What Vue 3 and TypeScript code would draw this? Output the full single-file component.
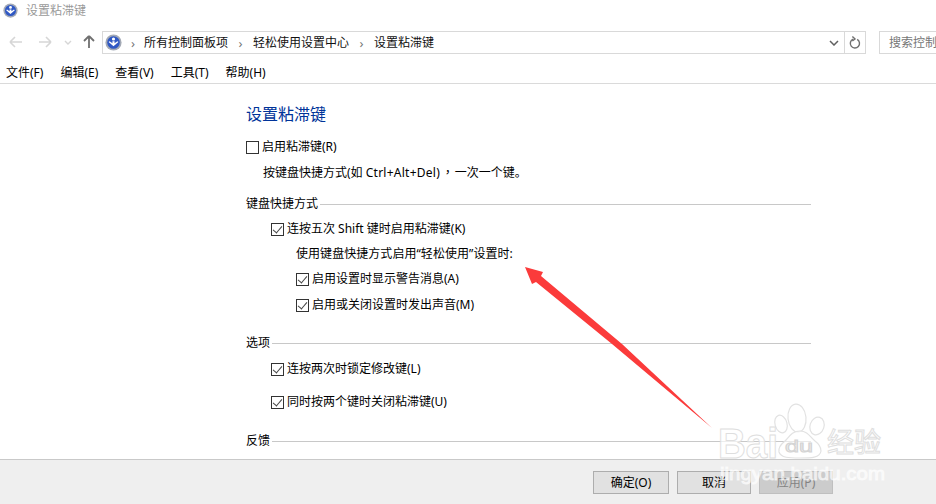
<script setup lang="ts">
const menus: string[] = ['文件(F)', '编辑(E)', '查看(V)', '工具(T)', '帮助(H)']
</script>

<template>
  <div class="window">
    <div class="titlebar">
      <svg class="logo" viewBox="0 0 16 16" width="15" height="15">
        <circle cx="8" cy="8" r="7.6" fill="#a3a9b5" />
        <circle cx="8" cy="8" r="5.9" fill="#2f58c4" />
        <circle cx="8" cy="4.7" r="1.5" fill="#fff" />
        <path d="M3.4 7.6 8 11.6l4.6-4-.9-.8L9 8.7V6.8H7v1.9L4.3 6.8z" fill="#fff" />
      </svg>
      <span>设置粘滞键</span>
    </div>

    <div class="navbar">
      <svg class="nav-icons" width="96" height="22" viewBox="0 0 96 22">
        <path d="M10 11h12M10 11l5-5M10 11l5 5" fill="none" stroke="#d6d6d6" stroke-width="1.6" />
        <path d="M39 11h12M51 11l-5-5M51 11l-5 5" fill="none" stroke="#d6d6d6" stroke-width="1.6" />
        <path d="M65 10l3 3 3-3" fill="none" stroke="#d6d6d6" stroke-width="1.4" />
        <path d="M89 17V5M89 5l-5 5M89 5l5 5" fill="none" stroke="#707070" stroke-width="1.8" />
      </svg>
      <div class="address">
        <svg class="logo" viewBox="0 0 16 16" width="17" height="17">
          <circle cx="8" cy="8" r="7.6" fill="#a3a9b5" />
          <circle cx="8" cy="8" r="5.9" fill="#2f58c4" />
          <circle cx="8" cy="4.7" r="1.5" fill="#fff" />
          <path d="M3.4 7.6 8 11.6l4.6-4-.9-.8L9 8.7V6.8H7v1.9L4.3 6.8z" fill="#fff" />
        </svg>
        <span class="crumb-sep first">›</span>
        <span>所有控制面板项</span>
        <span class="crumb-sep">›</span>
        <span>轻松使用设置中心</span>
        <span class="crumb-sep">›</span>
        <span>设置粘滞键</span>
        <span class="spacer"></span>
        <svg class="chev" width="10" height="6" viewBox="0 0 10 6"><path d="M1 1l4 4 4-4" fill="none" stroke="#606060" stroke-width="1.5" /></svg>
        <div class="refresh">
          <svg width="12" height="14" viewBox="0 0 12 14"><path d="M4 3.2A4.6 4.6 0 1 0 8.2 3.4M3.4 .6 6 3 3.4 5" fill="none" stroke="#707070" stroke-width="1.4" /></svg>
        </div>
      </div>
      <div class="search">搜索控制</div>
    </div>

    <div class="menubar">
      <span v-for="m in menus" :key="m">{{ m }}</span>
    </div>

    <div class="main">
      <h1>设置粘滞键</h1>
      <label class="row r-enable"><i class="box"></i>启用粘滞键(R)</label>
      <p class="desc">按键盘快捷方式(如 <span class="latin">Ctrl+Alt+Del</span>)<span class="comma">，</span>一次一个键。</p>

      <div class="group g1"><span>键盘快捷方式</span></div>
      <label class="row in1 r-a"><i class="box on"></i>连按五次 Shift 键时启用粘滞键(K)</label>
      <p class="sub">使用键盘快捷方式启用“轻松使用”设置时:</p>
      <label class="row in2 r-b"><i class="box on"></i>启用设置时显示警告消息(A)</label>
      <label class="row in2 r-c"><i class="box on"></i>启用或关闭设置时发出声音(M)</label>

      <div class="group g2"><span>选项</span></div>
      <label class="row in1 r-d"><i class="box on"></i>连按两次时锁定修改键(L)</label>
      <label class="row in1 r-e"><i class="box on"></i>同时按两个键时关闭粘滞键(U)</label>

      <div class="group g3"><span>反馈</span></div>
    </div>

    <div class="footer">
      <button class="ok">确定(O)</button>
      <button class="cancel">取消</button>
      <button class="apply" disabled>应用(P)</button>
    </div>

    <svg class="overlay" width="936" height="504" viewBox="0 0 936 504">
      <polygon points="525,267 543,272 541,276 622,344 712,428 612,344 536,282 532,284" fill="#fb3b3b" />
      <g fill="#fff" fill-opacity=".6" stroke="#e2e2e2" stroke-width="1.2">
        <ellipse cx="797" cy="418" rx="9" ry="14" transform="rotate(-6 797 418)" />
        <ellipse cx="817" cy="426" rx="7" ry="9" transform="rotate(18 817 426)" />
        <ellipse cx="781" cy="424" rx="6" ry="9" transform="rotate(-16 781 424)" />
        <path d="M800 431c-8 0-11 6-15 10-5 4-7 7-6 11 2 6 10 6 21 6 11 0 20 0 21-7 0-4-2-7-6-10-5-4-7-10-15-10z" />
      </g>
      <g class="wm-text">
        <text x="718" y="458" font-size="42" font-weight="700" textLength="60" lengthAdjust="spacingAndGlyphs">Bai</text>
        <text x="785" y="452" font-size="17" class="du" textLength="28" lengthAdjust="spacingAndGlyphs">du</text>
        <text x="827" y="452" font-size="27" class="cjk">经验</text>
        <text x="720" y="480" font-size="19" class="url" textLength="165" lengthAdjust="spacingAndGlyphs">jingyan.baidu.com</text>
      </g>
    </svg>
  </div>
</template>

<style>
html, body { margin: 0; background: #fff; }
</style>

<style scoped>
.window {
  width: 936px;
  height: 504px;
  position: relative;
  overflow: hidden;
  display: flex;
  flex-direction: column;
  background: #fff;
  color: #000;
  font: 12px/16px "Noto Sans", "Noto Sans CJK SC", sans-serif;
}
.titlebar {
  height: 31px;
  flex: none;
  box-sizing: border-box;
  padding: 3px 0 0 3px;
  display: flex;
  align-items: flex-start;
  gap: 8px;
  color: #9a9a9a;
  line-height: 16px;
}
.logo { flex: none; }
.navbar {
  height: 23px;
  flex: none;
  display: flex;
  align-items: stretch;
}
.nav-icons { flex: none; margin-right: 6px; width: 96px; }
.address {
  width: 764px;
  box-sizing: border-box;
  border: 1px solid #d9d9d9;
  display: flex;
  align-items: center;
  padding-left: 2px;
  color: #111;
}
.crumb-sep {
  color: #777;
  width: 25px;
  text-align: center;
  font-size: 13px;
  line-height: 16px;
}
.crumb-sep.first { width: 22px; }
.spacer { flex: 1; }
.chev { margin-right: 5px; }
.refresh {
  width: 20px;
  height: 100%;
  border-left: 1px solid #d9d9d9;
  display: flex;
  align-items: center;
  justify-content: center;
}
.search {
  margin-left: 13px;
  flex: 1;
  border: 1px solid #d9d9d9;
  border-right: none;
  padding-left: 9px;
  color: #767676;
  line-height: 21px;
  white-space: nowrap;
  overflow: hidden;
}
.menubar {
  height: 30px;
  flex: none;
  box-sizing: border-box;
  border-bottom: 1px solid #dadada;
  padding: 11px 0 0 6px;
  display: flex;
  gap: 17px;
}
.main {
  flex: 1;
  min-height: 0;
  overflow: hidden;
  box-sizing: border-box;
  padding: 18px 125px 0 246px;
}
h1 {
  margin: 0;
  font-size: 16px;
  font-weight: 400;
  line-height: 24px;
  color: #003399;
}
.row {
  display: flex;
  align-items: center;
  gap: 3px;
  height: 16px;
}
.box {
  flex: none;
  box-sizing: border-box;
  width: 13px;
  height: 13px;
  border: 1px solid #333;
  background: #fff;
  position: relative;
}
.box.on::after {
  content: "";
  position: absolute;
  left: 3px;
  top: 0;
  width: 4px;
  height: 8px;
  border: solid #444;
  border-width: 0 1.2px 1.2px 0;
  transform: rotate(40deg);
}
.r-enable { margin-top: 13px; }
.desc { margin: 9px 0 0 17px; white-space: nowrap; }
.latin { letter-spacing: .25px; }
.comma { font-family: "Noto Sans CJK TC", sans-serif; margin-left: 2px; margin-right: 1px; }
.sub { margin: 9px 0 0 50px; letter-spacing: .05px; }
.in1 { margin-left: 25px; }
.in2 { margin-left: 50px; }
.group {
  display: flex;
  align-items: center;
  height: 16px;
}
.group::after {
  content: "";
  flex: 1;
  height: 1px;
  background: #c8c8c8;
  margin: 1px 0 0 2px;
}
.g1 { margin-top: 15px; }
.r-a { margin-top: 9px; }
.r-b { margin-top: 9px; }
.r-c { margin-top: 10px; }
.g2 { margin-top: 22px; }
.r-d { margin-top: 10px; }
.r-e { margin-top: 17px; }
.g3 { margin-top: 23px; }
.g3::after { margin-top: 0; }
.footer {
  height: 45px;
  flex: none;
  box-sizing: border-box;
  border-top: 1px solid #c9c9c9;
  background: #efefef;
  padding: 11px 0 0 593px;
  display: flex;
  align-items: flex-start;
  gap: 8px;
}
button {
  height: 23px;
  box-sizing: border-box;
  border: 1px solid #adadad;
  background: #e1e1e1;
  font: inherit;
  color: #000;
  padding: 0;
}
.ok { width: 76px; }
.cancel { width: 74px; }
.apply {
  width: 74px;
  background: #cccccc;
  border-color: #bfbfbf;
  color: #838383;
}
.overlay {
  position: absolute;
  left: 0;
  top: 0;
  pointer-events: none;
}
.wm-text text {
  font-family: "Liberation Sans", sans-serif;
  fill: #fff;
  fill-opacity: .7;
  stroke: #dedede;
  stroke-width: 1;
}
.wm-text .du { fill: #f2f2f2; stroke: #d4d4d4; }
.wm-text .url { fill-opacity: .55; stroke: #ffffff; stroke-opacity: .6; }
.wm-text .cjk { font-family: "Noto Sans CJK SC", sans-serif; }
</style>
